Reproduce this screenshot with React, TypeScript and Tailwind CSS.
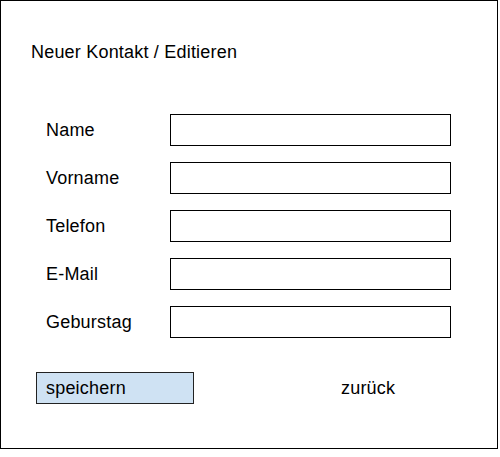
import React from "react";

const fields = ["Name", "Vorname", "Telefon", "E-Mail", "Geburstag"];

export default function App() {
  return (
    <div className="w-[500px] h-[457px] bg-white" style={{ fontFamily: '"Liberation Sans", Arial, sans-serif' }}>
      <div className="w-[498px] h-[449px] border-[1.5px] border-black flex flex-col text-[18px] tracking-[0.2px] text-black">
        <div className="pl-[30px] pt-[40px] leading-[22px]">Neuer Kontakt / Editieren</div>
        <div className="flex flex-col gap-[16px] mt-[51px] pl-[45px]">
          {fields.map((f) => (
            <div key={f} className="flex items-center h-[32px]">
              <div className="w-[124px]">{f}</div>
              <div className="w-[281px] h-[32px] border-[1.5px] border-black" />
            </div>
          ))}
        </div>
        <div className="flex items-center mt-[34px] pl-[35px]">
          <div className="w-[158px] h-[32px] bg-[#cfe2f3] border border-[#222] flex items-center pl-[9px]">
            speichern
          </div>
          <div className="ml-[147px]">zurück</div>
        </div>
      </div>
    </div>
  );
}
